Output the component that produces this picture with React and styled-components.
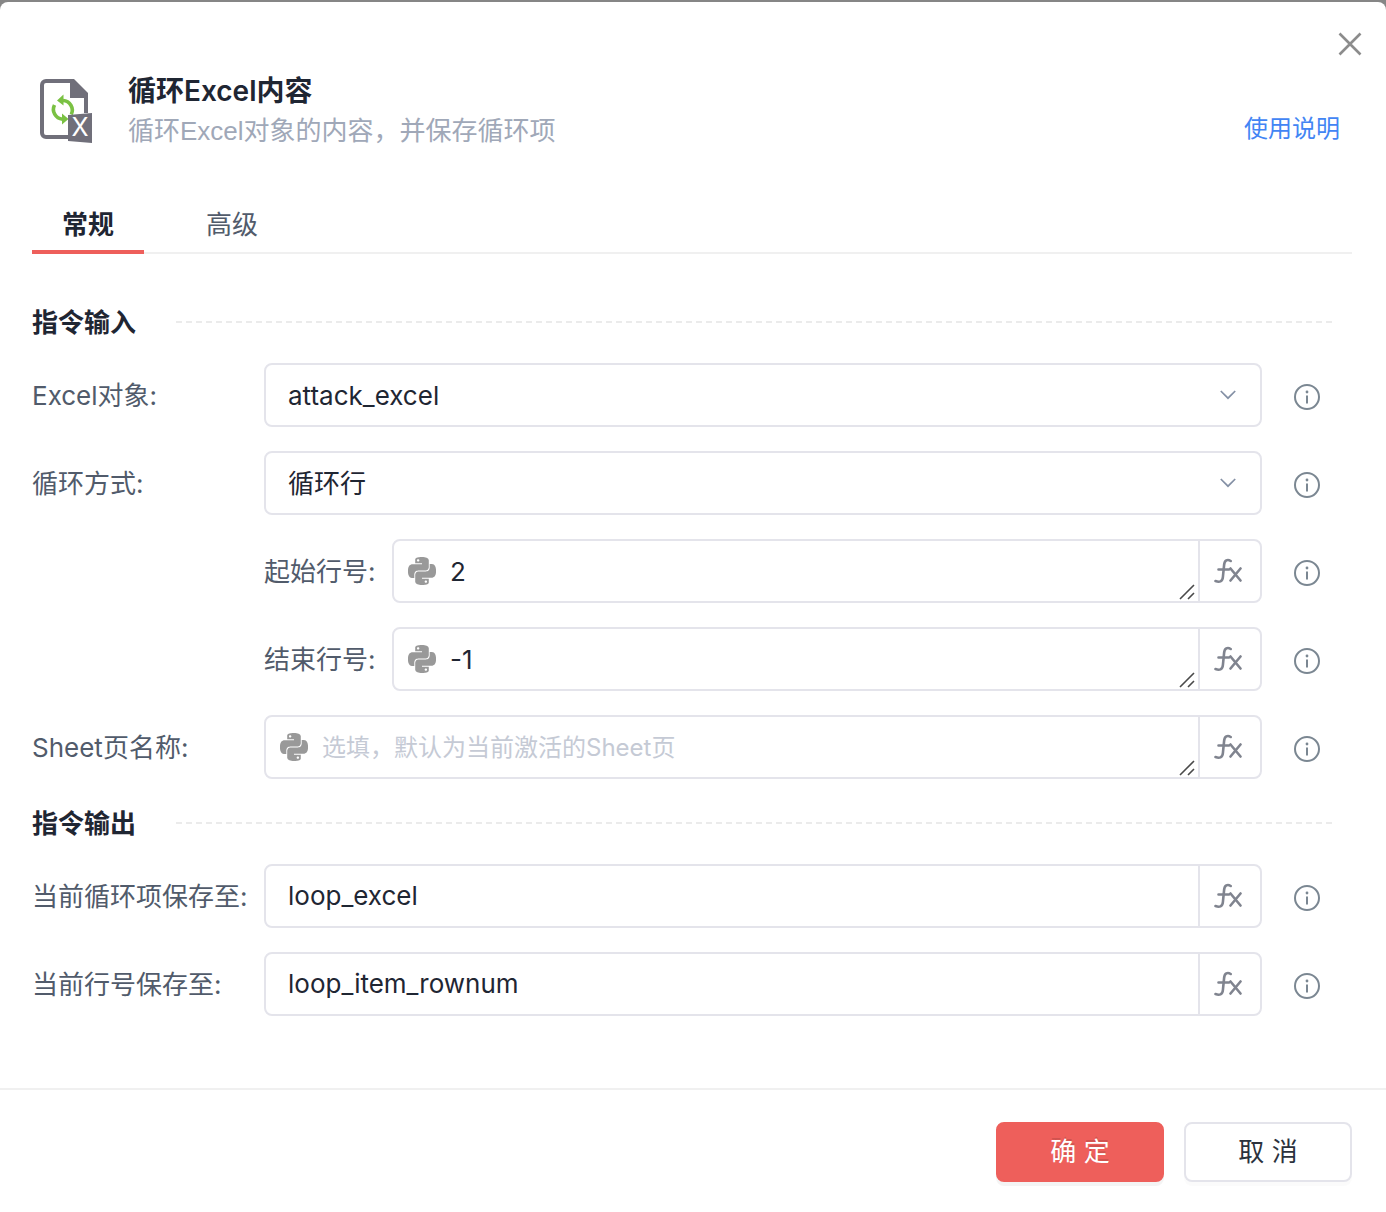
import React, { useState } from "react";
import styled, { createGlobalStyle } from "styled-components";
import { SiPython } from "react-icons/si";

const loopModes = ["循环行", "循环列", "循环区域"];

const FileLoopIcon = () => (
  <svg width="56" height="68" viewBox="0 0 56 68" aria-hidden="true">
    <path
      d="M32 4H8a4 4 0 0 0-4 4v48a4 4 0 0 0 4 4h24M48 36V18"
      transform="translate(-2 -1)"
      fill="none"
      stroke="#706f7a"
      strokeWidth="4"
    />
    <path d="M30 1h4l14 14v5H30z" fill="#706f7a" />
    <g fill="none" stroke="#7ac143" strokeWidth="3.600">
      <path d="M14.500 27a9.800 9.800 0 0 0 8 14.200" />
      <path d="M31.300 36.500a9.800 9.800 0 0 0-8.300-14" />
    </g>
    <path d="M17 22.500l6.500-6v11zM28.500 41l-6.500-5.500v11z" fill="#7ac143" />
    <path d="M28 37l24-2v30l-24-2z" fill="#706f7a" />
    <text x="40" y="58" textAnchor="middle" fontSize="25" fill="#fff" fontFamily="Inter, sans-serif">
      X
    </text>
  </svg>
);

const CloseIcon = () => (
  <svg width="24" height="24" viewBox="0 0 24 24" aria-hidden="true">
    <path d="M1.500 1.500l21 21M22.500 1.500l-21 21" stroke="#8c8c8c" strokeWidth="2.600" />
  </svg>
);

const ChevronIcon = () => (
  <svg width="16" height="10" viewBox="0 0 16 10" aria-hidden="true">
    <path d="M.8 1l7.200 7.200L15.200 1" fill="none" stroke="#8490a5" strokeWidth="1.700" />
  </svg>
);

const InfoIcon = () => (
  <svg width="26" height="26" viewBox="0 0 26 26" aria-hidden="true">
    <circle cx="13" cy="13" r="12" fill="none" stroke="#7b8792" strokeWidth="2" />
    <circle cx="13" cy="8" r="1.400" fill="#7b8792" />
    <path d="M13 11.500v8" stroke="#7b8792" strokeWidth="2" />
  </svg>
);

const FxIcon = () => (
  <svg width="28" height="26" viewBox="0 0 28 26" aria-hidden="true">
    <g fill="none" stroke="#80848f" strokeWidth="2.600" strokeLinecap="round" strokeLinejoin="round">
      <path d="M1.500 23c3.800 1.500 7 .8 7.400-4L10.100 7c.4-4.800 3.400-6 6.600-4" />
      <path d="M4.500 11.500H15M16.500 10.500l10 12M26.500 10.500l-10 12" />
    </g>
  </svg>
);

const GripIcon = () => (
  <Grip width="16" height="16" viewBox="0 0 16 16" aria-hidden="true">
    <path d="M1 15L15 1M9 15l6-6" stroke="#4a4a4a" strokeWidth="1.600" />
  </Grip>
);

const InfoTip = ({ label }) => (
  <InfoButton type="button" aria-label={`${label}说明`}>
    <InfoIcon />
  </InfoButton>
);

const SelectRow = ({ id, label, value, options }) => {
  const [current, setCurrent] = useState(value);
  return (
    <Row>
      <Label htmlFor={id}>{label}:</Label>
      <Field>
        <Select id={id} value={current} onChange={(e) => setCurrent(e.target.value)}>
          {options.map((item) => (
            <option key={item}>{item}</option>
          ))}
        </Select>
        <Arrow>
          <ChevronIcon />
        </Arrow>
      </Field>
      <InfoTip label={label} />
    </Row>
  );
};

const CodeRow = ({ id, label, value, placeholder, nested }) => (
  <Row $nested={nested}>
    <Label htmlFor={id} $nested={nested}>
      {label}:
    </Label>
    <Field>
      <PythonMark>
        <SiPython size={28} />
      </PythonMark>
      <AreaBox>
        <Area id={id} rows={1} defaultValue={value} placeholder={placeholder} />
        <GripIcon />
      </AreaBox>
      <FxButton type="button" aria-label="编辑表达式">
        <FxIcon />
      </FxButton>
    </Field>
    <InfoTip label={label} />
  </Row>
);

const InputRow = ({ id, label, value }) => (
  <Row>
    <Label htmlFor={id}>{label}:</Label>
    <Field>
      <Input id={id} type="text" defaultValue={value} />
      <FxButton type="button" aria-label="编辑表达式">
        <FxIcon />
      </FxButton>
    </Field>
    <InfoTip label={label} />
  </Row>
);

const App = () => {
  const [tab, setTab] = useState("常规");

  return (
    <>
      <GlobalStyle />
      <Dialog role="dialog" aria-labelledby="dialog-title">
        <TopBar>
          <IconButton type="button" aria-label="关闭">
            <CloseIcon />
          </IconButton>
        </TopBar>

        <Header>
          <Logo>
            <FileLoopIcon />
          </Logo>
          <Heading>
            <Title id="dialog-title">循环Excel内容</Title>
            <Subtitle>循环Excel对象的内容，并保存循环项</Subtitle>
          </Heading>
          <HelpLink href="#help">使用说明</HelpLink>
        </Header>

        <Tabs role="tablist">
          {["常规", "高级"].map((name) => (
            <Tab
              key={name}
              type="button"
              role="tab"
              aria-selected={tab === name}
              $active={tab === name}
              onClick={() => setTab(name)}
            >
              {name}
            </Tab>
          ))}
        </Tabs>

        <Body>
          <SectionTitle>指令输入</SectionTitle>
          <Rows>
            <SelectRow id="excel" label="Excel对象" value="attack_excel" options={["attack_excel"]} />
            <SelectRow id="mode" label="循环方式" value="循环行" options={loopModes} />
            <CodeRow id="start" label="起始行号" value="2" nested />
            <CodeRow id="end" label="结束行号" value="-1" nested />
            <CodeRow id="sheet" label="Sheet页名称" placeholder="选填，默认为当前激活的Sheet页" />
          </Rows>
          <SectionTitle>指令输出</SectionTitle>
          <Rows>
            <InputRow id="item" label="当前循环项保存至" value="loop_excel" />
            <InputRow id="rownum" label="当前行号保存至" value="loop_item_rownum" />
          </Rows>
        </Body>

        <Footer>
          <Button type="button" $primary>
            确 定
          </Button>
          <Button type="button">取 消</Button>
        </Footer>
      </Dialog>
    </>
  );
};

export default App;

const GlobalStyle = createGlobalStyle`
  * {
    box-sizing: border-box;
  }

  body {
    margin: 0;
    padding-top: 2px;
    background: #868686;
    color: #1f2633;
    font-family: Inter, "Noto Sans CJK SC", sans-serif;
    font-size: 26px;
    line-height: 40px;
  }

  button, input, select, textarea {
    margin: 0;
    padding: 0;
    border: 0;
    background: none;
    color: inherit;
    font: inherit;
    outline: none;
  }

  button {
    cursor: pointer;
  }

  svg {
    display: block;
    flex-shrink: 0;
  }
`;

const Dialog = styled.section`
  display: flex;
  flex-direction: column;
  min-height: calc(100vh - 2px);
  background: #fff;
  border-radius: 8px 8px 0 0;
`;

const TopBar = styled.div`
  display: flex;
  justify-content: flex-end;
  padding: 30px 24px 0;
`;

const IconButton = styled.button`
  display: flex;
`;

const InfoButton = styled(IconButton)`
  margin-top: 4px;
`;

const Header = styled.header`
  display: flex;
  align-items: flex-start;
  padding: 15px 46px 0 40px;
`;

const Logo = styled.div`
  padding-top: 7px;
`;

const Heading = styled.div`
  flex: 1;
  margin-left: 32px;
`;

const Title = styled.h1`
  margin: 0;
  font-size: 28px;
  font-weight: 600;
  line-height: 40px;
`;

const Subtitle = styled.p`
  margin: 0;
  color: #a0a8b8;
  font-family: "Liberation Sans", "Noto Sans CJK SC", sans-serif;
`;

const HelpLink = styled.a`
  align-self: flex-end;
  color: #4285f4;
  font-size: 24px;
  line-height: 44px;
  text-decoration: none;
`;

const Tabs = styled.div`
  display: flex;
  gap: 32px;
  margin: 45px 34px 0 32px;
  box-shadow: inset 0 -2px #f0f0f0;
`;

const Tab = styled.button`
  padding: 9px 30px 5px;
  border-bottom: 4px solid ${({ $active }) => ($active ? "#ee5f5b" : "transparent")};
  color: ${({ $active }) => ($active ? "#1f2633" : "#515b6b")};
  font-weight: ${({ $active }) => ($active ? 700 : 400)};
`;

const Body = styled.main`
  flex: 1;
  padding: 49px 34px 70px 32px;
`;

const SectionTitle = styled.h2`
  display: flex;
  align-items: center;
  gap: 40px;
  margin: 0 20px 20px 0;
  font-size: 26px;
  font-weight: 600;

  &::after {
    content: "";
    flex: 1;
    height: 2px;
    margin-bottom: 2px;
    background: repeating-linear-gradient(90deg, #ebebeb 0 6px, transparent 6px 10px);
  }
`;

const Rows = styled.div`
  display: flex;
  flex-direction: column;
  gap: 24px;

  & + ${SectionTitle} {
    margin-top: 25px;
  }
`;

const Row = styled.div`
  display: flex;
  align-items: center;
  padding-left: ${({ $nested }) => ($nested ? "232px" : 0)};
  padding-right: 32px;
`;

const Label = styled.label`
  flex: 0 0 ${({ $nested }) => ($nested ? "128px" : "232px")};
  padding-top: 2px;
  color: #515b6b;
  white-space: nowrap;
`;

const Field = styled.div`
  display: flex;
  flex: 1;
  height: 64px;
  margin-right: 32px;
  border: 2px solid #e4e4eb;
  border-radius: 8px;
`;

const Select = styled.select`
  flex: 1;
  padding: 2px 22px 0;
  appearance: none;
`;

const Arrow = styled.span`
  display: flex;
  align-items: center;
  padding-right: 24px;
  pointer-events: none;
`;

const PythonMark = styled.span`
  display: flex;
  align-items: center;
  padding: 0 14px;
  color: #999;
`;

const AreaBox = styled.div`
  position: relative;
  display: flex;
  flex: 1;
`;

const Area = styled.textarea`
  flex: 1;
  height: 60px;
  padding: 11px 0 9px;
  overflow: hidden;
  resize: none;

  &::placeholder {
    color: #c5cad5;
    font-size: 24px;
  }
`;

const Grip = styled.svg`
  position: absolute;
  right: 3px;
  bottom: 1px;
`;

const Input = styled.input`
  flex: 1;
  min-width: 0;
  padding: 0 22px;
`;

const FxButton = styled.button`
  display: flex;
  align-items: center;
  justify-content: center;
  width: 62px;
  padding-right: 4px;
  border-left: 2px solid #e4e4eb;
`;

const Footer = styled.footer`
  display: flex;
  justify-content: flex-end;
  gap: 20px;
  padding: 32px 34px 30px;
  border-top: 2px solid #f0f0f0;
`;

const Button = styled.button`
  width: 168px;
  height: 60px;
  border: 2px solid ${({ $primary }) => ($primary ? "#ee5f5b" : "#e4e4eb")};
  border-radius: 8px;
  background: ${({ $primary }) => ($primary ? "#ee5f5b" : "#fff")};
  box-shadow: 0 4px 0 ${({ $primary }) => ($primary ? "rgba(0, 0, 0, 0.045)" : "rgba(0, 0, 0, 0.015)")};
  color: ${({ $primary }) => ($primary ? "#fff" : "#2b323d")};
  text-shadow: ${({ $primary }) => ($primary ? "0 -2px 0 rgba(0, 0, 0, 0.12)" : "none")};
`;
